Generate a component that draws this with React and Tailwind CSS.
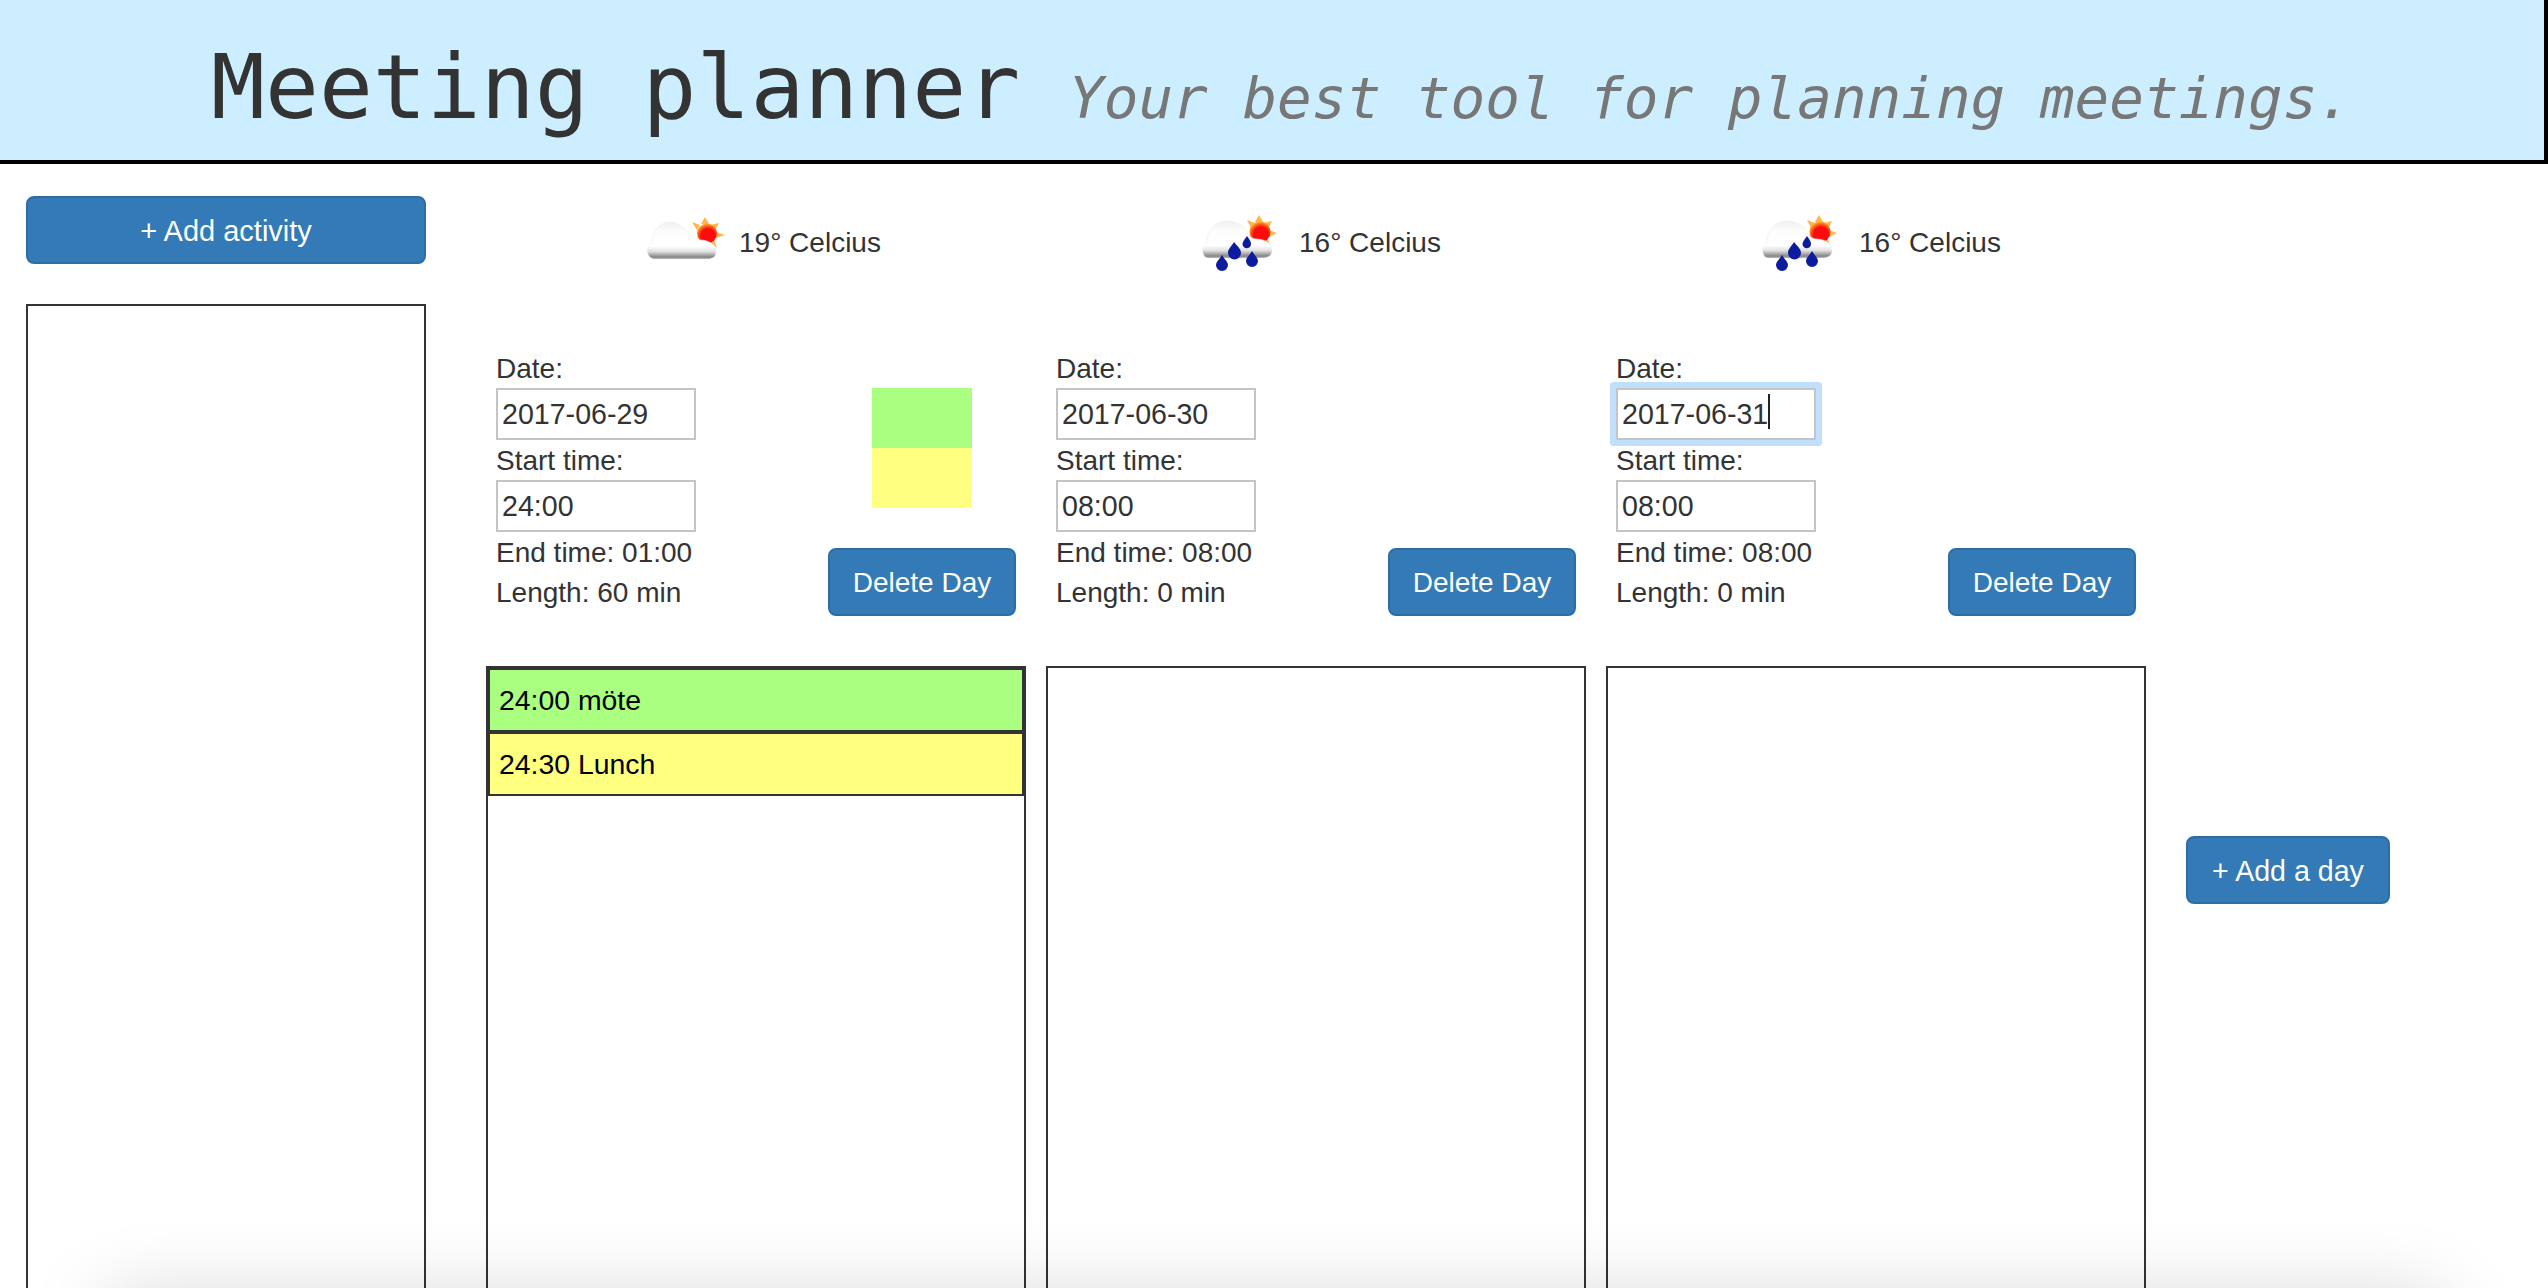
const columns = [
  {
    date: "2017-06-29",
    start: "24:00",
    end: "01:00",
    length: "60 min",
    temp: "19° Celcius",
    rainy: false,
    iconLeft: "ml-[154px]",
    textGap: "ml-[9px]",
    bar: true,
    activities: [
      { label: "24:00 möte", bg: "bg-[#aaff80]" },
      { label: "24:30 Lunch", bg: "bg-[#ffff80]" },
    ],
  },
  {
    date: "2017-06-30",
    start: "08:00",
    end: "08:00",
    length: "0 min",
    temp: "16° Celcius",
    rainy: true,
    iconLeft: "ml-[149px]",
    textGap: "ml-[14px]",
    activities: [],
  },
  {
    date: "2017-06-31",
    start: "08:00",
    end: "08:00",
    length: "0 min",
    temp: "16° Celcius",
    rainy: true,
    iconLeft: "ml-[149px]",
    textGap: "ml-[14px]",
    focused: true,
    activities: [],
  },
];

function Button({ children, className = "" }) {
  return (
    <button className={`h-[68px] rounded-lg border-2 border-[#2e6da4] bg-[#337ab7] pt-[2px] leading-10 text-white ${className}`}>
      {children}
    </button>
  );
}

function WeatherIcon({ rainy, id }) {
  return (
    <svg width="90" height="70" viewBox="0 0 90 70" className="shrink-0">
      <defs>
        <linearGradient id={`cloud-${id}`} x1="0" y1="0" x2="0" y2="1">
          <stop offset="0" stopColor="#f0f0f0" />
          <stop offset="0.25" stopColor="#fcfcfc" />
          <stop offset="0.66" stopColor="#ffffff" />
          <stop offset="0.8" stopColor="#e0e0e0" />
          <stop offset="0.94" stopColor="#8a8a8a" />
          <stop offset="1" stopColor="#9a9a9a" />
        </linearGradient>
        <radialGradient id={`sun-${id}`} cx="0.55" cy="0.62" r="0.6">
          <stop offset="0.6" stopColor="#fb0f0f" />
          <stop offset="1" stopColor="#ffa826" />
        </radialGradient>
        <filter id={`soft-${id}`} x="-10%" y="-10%" width="120%" height="120%">
          <feGaussianBlur stdDeviation="0.7" />
        </filter>
      </defs>
      {rainy ? (
        <g filter={`url(#soft-${id})`}>
          <g fill="#ffb54a">
            <path d="M60 12 L64 5 L68 12 Z" />
            <path d="M52 10 L60 13 L56 18 Z" />
            <path d="M77 11 L73 19 L68 13 Z" />
            <path d="M82 23 L74 27 L74 20 Z" />
            <path d="M75 35 L68 30 L72 27 Z" />
          </g>
          <circle cx="65" cy="22" r="10.5" fill={`url(#sun-${id})`} />
          <path
            d="M13 48 C6 47 6 36 12 33 C11 20 21 11 31 11 C38 11 44 13 50 18 C52 23 55 29 61 29 C69 29 77 33 77 41 C77 46 72 48 68 48 Z"
            fill={`url(#cloud-${id})`}
            stroke="#eeeeee"
            strokeWidth="0.6"
          />
          <g fill="#0a1f9e">
            <path d="M27 45 C24 50 21 52 21 55 A5.8 5.8 0 0 0 33 55 C33 52 30 50 27 45 Z" />
            <path d="M39 32 C36 37 33 39 33 43 A6.5 6.5 0 0 0 46 43 C46 39 43 37 39 32 Z" />
            <path d="M57 41 C54 46 51 48 51 51 A5.8 5.8 0 0 0 63 51 C63 48 60 46 57 41 Z" />
            <path d="M52 26 C49 30 47.5 32 47.5 34 A4.2 4.2 0 0 0 56 34 C56 32 55 30 52 26 Z" />
          </g>
        </g>
      ) : (
        <g filter={`url(#soft-${id})`}>
          <g fill="#ffb54a">
            <path d="M61 14 L65 7 L69 14 Z" />
            <path d="M52 12 L60 15 L57 20 Z" />
            <path d="M79 13 L75 20 L70 15 Z" />
            <path d="M85 25 L76 28 L76 22 Z" />
            <path d="M77 38 L70 32 L74 29 Z" />
          </g>
          <circle cx="67" cy="23.5" r="10" fill={`url(#sun-${id})`} />
          <path
            d="M14 49 C6 48 5 36 12 33 C12 20 20 12 30 12 C37 12 43 16 48 22 C51 25 55 30 60 30 C68 30 76 34 76 42 C76 47 72 49 68 49 Z"
            fill={`url(#cloud-${id})`}
            stroke="#eeeeee"
            strokeWidth="0.6"
          />
        </g>
      )}
    </svg>
  );
}

function TextField({ value, focused }) {
  return (
    <div className="relative h-[52px] w-[200px]">
      <input
        readOnly
        value={value}
        className={`h-full w-full border-2 border-[#c4c4c4] bg-white px-1 text-[28.6px] text-[#333] caret-transparent outline-none ${focused ? "rounded-[1px] ring-[6px] ring-[#c0dfff]" : ""}`}
      />
      {focused && <span className="absolute left-[152px] top-[6px] h-[35px] w-[2px] bg-[#222]" />}
    </div>
  );
}

function DayColumn({ day, index }) {
  return (
    <div className="mr-5 w-[540px] shrink-0">
      <div className="flex h-[152px] items-start">
        <div className={`mt-[14px] ${day.iconLeft}`}>
          <WeatherIcon rainy={day.rainy} id={index} />
        </div>
        <span className={`mt-[27px] text-[28px] leading-10 text-[#333] ${day.textGap}`}>{day.temp}</span>
      </div>

      <div className="flex h-[318px] justify-between pl-[10px] pr-[10px]">
        <div className="text-[28px] leading-[42px] text-[#333]">
          <div className="h-10">Date:</div>
          <TextField value={day.date} focused={day.focused} />
          <div className="h-10">Start time:</div>
          <TextField value={day.start} />
          <div className="h-10">End time: {day.end}</div>
          <div className="h-10">Length: {day.length}</div>
        </div>
        <div className="flex h-[268px] w-[188px] flex-col items-center pt-10">
          {day.bar && (
            <div className="w-[100px]">
              <div className="h-[60px] bg-[#aaff80]" />
              <div className="h-[60px] bg-[#ffff80]" />
            </div>
          )}
          <Button className="mt-auto w-full text-[28px]">Delete Day</Button>
        </div>
      </div>

      <div className="h-[1000px] border-2 border-[#333]">
        {day.activities.map((a) => (
          <div
            key={a.label}
            className={`h-16 border-2 border-[#333] px-[9px] text-[28.4px] leading-[60px] text-black ${a.bg}`}
          >
            {a.label}
          </div>
        ))}
      </div>
    </div>
  );
}

export default function App() {
  return (
    <div className="relative h-[1288px] overflow-hidden bg-white font-['Liberation_Sans',sans-serif]">
      <header className="flex h-[164px] justify-center whitespace-pre border-b-4 border-r-4 border-black bg-[#cceeff] pl-[19px] pt-[38px] font-['DejaVu_Sans_Mono',monospace]">
        <h1 className="text-[89.6px] leading-[99px] font-normal text-[#333]">
          Meeting planner <small className="-ml-[5px] text-[57.6px] italic text-[#777]">Your best tool for planning meetings.</small>
        </h1>
      </header>

      <div className="flex pl-[26px] pt-8">
        <aside className="w-[400px] shrink-0">
          <Button className="w-full text-[29px]">+ Add activity</Button>
          <div className="mt-10 h-[1000px] border-2 border-[#333]" />
        </aside>

        <main className="ml-[60px] flex">
          {columns.map((day, i) => (
            <DayColumn key={day.date} day={day} index={i} />
          ))}
          <Button className="ml-5 mt-[640px] w-[204px] shrink-0 text-[28.6px]">+ Add a day</Button>
        </main>
      </div>

      {/* window shadow bleeding in from the bottom edge */}
      <div className="pointer-events-none absolute left-[105px] right-[105px] top-[1300px] h-20 shadow-[0_0_80px_rgba(0,0,0,0.18)]" />
    </div>
  );
}
